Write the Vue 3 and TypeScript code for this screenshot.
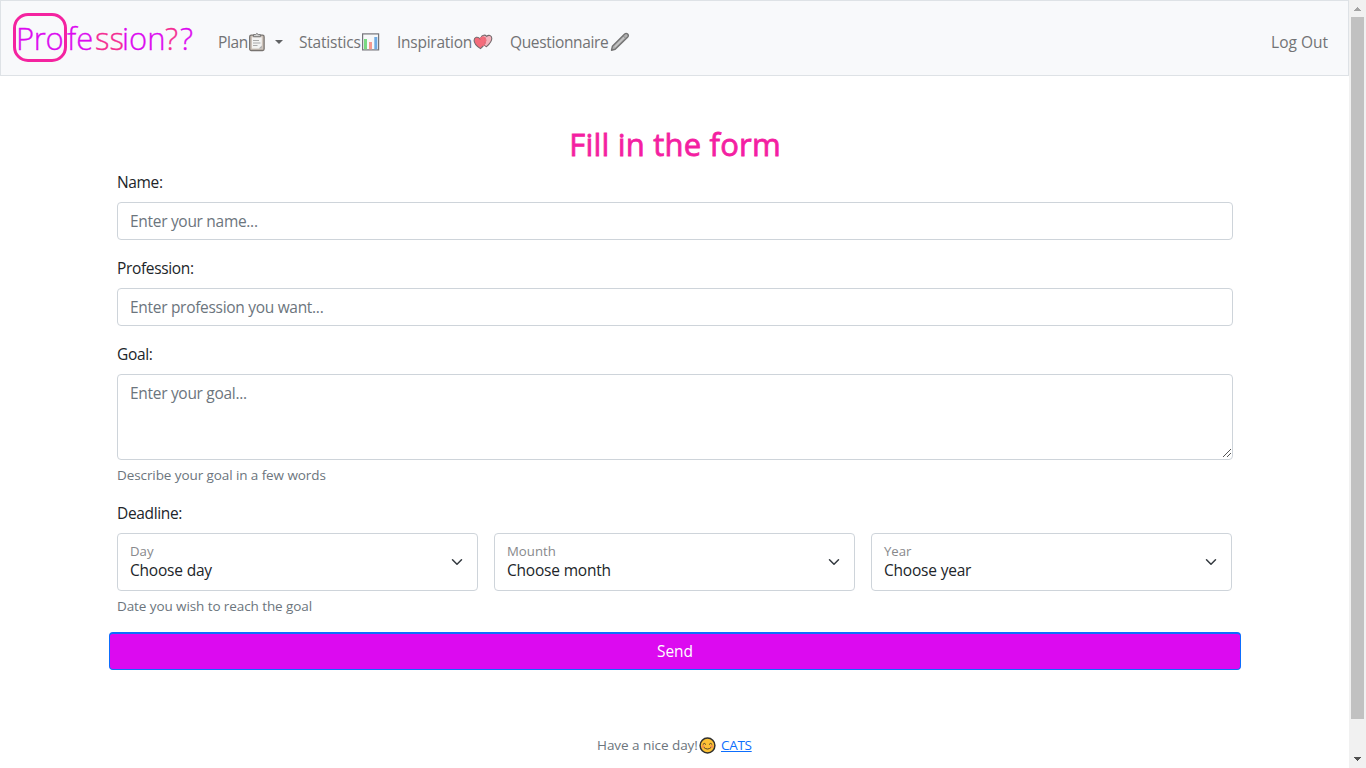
<script setup lang="ts">
import { ref } from 'vue'

interface TextField {
  id: string
  label: string
  placeholder: string
}
interface SelectField {
  id: string
  label: string
  choice: string
}

const fields: TextField[] = [
  { id: 'name', label: 'Name:', placeholder: 'Enter your name...' },
  { id: 'profession', label: 'Profession:', placeholder: 'Enter profession you want...' },
]
const selects: SelectField[] = [
  { id: 'day', label: 'Day', choice: 'Choose day' },
  { id: 'month', label: 'Mounth', choice: 'Choose month' },
  { id: 'year', label: 'Year', choice: 'Choose year' },
]
const values = ref<Record<string, string>>({ name: '', profession: '' })
const goal = ref('')
</script>

<template>
  <div class="window">
    <div class="page">
      <nav class="navbar">
        <a class="brand"><span class="brand-box">Pro</span><span class="fe">fe</span><span class="ss pink">ss</span><span class="ion">ion</span><span class="q pink">?</span><span class="q">?</span></a>
        <div class="links">
          <a class="link plan"><span class="t">Plan</span>
            <svg class="emoji clip" width="18" height="20" viewBox="0 0 18 20">
              <rect x="1.7" y="3.2" width="14.4" height="15.3" rx="1.5" fill="#cfc4bb" stroke="#77736f" stroke-width="1.3" />
              <rect x="4" y="5.3" width="9.8" height="11.2" fill="#f3f3f2" />
              <path d="M5.5 4.7V2.6H7.5Q8.9 .3 10.3 2.6H12.4V4.7Z" fill="#d7d7d6" stroke="#777" stroke-width="1" />
              <path d="M5 8.5H11M5 11H12.5M5 13.5H9.5" stroke="#aaa" stroke-width="1.1" />
              <path d="M13.8 13.5V16.5H10.8Z" fill="#aaa" />
            </svg>
            <span class="caret"></span>
          </a>
          <a class="link stats"><span class="t">Statistics</span>
            <svg class="emoji" width="19" height="20" viewBox="0 0 19 20">
              <rect x="1.6" y="1.9" width="16" height="16" fill="#f7f8f9" stroke="#74757a" stroke-width="1.2" />
              <rect x="3" y="7" width="3" height="10.3" fill="#78d982" />
              <rect x="8" y="10" width="3" height="7.3" fill="#f59a90" />
              <rect x="13.3" y="5" width="3" height="12.3" fill="#70abe3" />
            </svg>
          </a>
          <a class="link insp"><span class="t">Inspiration</span>
            <svg class="emoji" width="20" height="20" viewBox="0 0 20 20">
              <path d="M13.5 14.7C8.5 12 7.5 8 8.1 5.5C9 2.5 12.3 2.7 13.7 4.4C15.5 2.5 18.7 3.4 18.8 6.3C18.9 9 16 12.5 13.5 14.7Z" fill="#f4b2bc" stroke="#74696c" stroke-width="1.1" />
              <path d="M7.5 16.6C3.5 14 1 11 1.1 8.2C1.3 5 4.8 4.1 7 6.9C8.7 4.3 12.5 4.8 12.7 8C12.8 11 10.5 14 7.5 16.6Z" fill="#f46c7b" stroke="#74696c" stroke-width="1.1" />
              <path d="M7 6.9C8.7 4.3 12.5 4.8 12.7 8C12.8 10 11.5 12.3 10 14" fill="none" stroke="#f46c7b" stroke-width="1.4" />
            </svg>
          </a>
          <a class="link quest"><span class="t">Questionnaire</span>
            <svg class="emoji" width="20" height="20" viewBox="0 0 20 20">
              <path d="M1.5 18.2L2.4 14.3L14.7 2Q16.2 .7 17.6 2.1Q19 3.5 17.8 4.9L5.2 17.3Z" fill="#b0b0b0" stroke="#737373" stroke-width="1.4" stroke-linejoin="round" />
              <path d="M4.8 14.9L14.5 5.2" stroke="#c9c9c9" stroke-width="1.2" />
              <path d="M13 3.7L16.2 6.9" stroke="#858585" stroke-width=".8" />
            </svg>
          </a>
        </div>
        <a class="link logout"><span class="t">Log Out</span></a>
      </nav>

      <form class="form" @submit.prevent>
        <h2>Fill in the form</h2>
        <div v-for="f in fields" :key="f.id" class="group">
          <label :for="f.id">{{ f.label }}</label>
          <input :id="f.id" v-model="values[f.id]" class="control" type="text" :placeholder="f.placeholder">
        </div>
        <div class="group">
          <label for="goal">Goal:</label>
          <div class="area">
            <textarea id="goal" v-model="goal" class="control" placeholder="Enter your goal..."></textarea>
            <svg class="grip" width="10" height="10" viewBox="0 0 10 10" shape-rendering="crispEdges">
              <path d="M0.5 8.5L8.5 .5M4.5 8.5L8.5 4.5" stroke="#555" stroke-width="1" />
            </svg>
          </div>
          <div class="help">Describe your goal in a few words</div>
        </div>
        <div class="group">
          <label>Deadline:</label>
          <div class="selects">
            <div v-for="s in selects" :key="s.id" class="select">
              <div class="select-text">
                <div class="select-label">{{ s.label }}</div>
                <div class="select-choice">{{ s.choice }}</div>
              </div>
              <svg width="16" height="12" viewBox="0 0 16 16">
                <path d="M2 5l6 6 6-6" fill="none" stroke="#343a40" stroke-width="2" stroke-linecap="round" stroke-linejoin="round" />
              </svg>
            </div>
          </div>
          <div class="help">Date you wish to reach the goal</div>
        </div>
        <button class="send" type="submit">Send</button>
      </form>

      <footer class="footer">
        <span class="nice">Have a nice day!</span>
        <svg width="17" height="17" viewBox="0 0 17 17">
          <circle cx="8.5" cy="8.5" r="7.4" fill="#fdc235" stroke="#30302e" stroke-width="1.5" />
          <circle cx="4.2" cy="9.4" r="1.5" fill="#f5954f" />
          <circle cx="12.8" cy="9.4" r="1.5" fill="#f5954f" />
          <path d="M4 7.2Q5.3 5.2 6.7 7.2M10.3 7.2Q11.7 5.2 13 7.2M5.2 10.7Q8.5 13.6 11.8 10.7" fill="none" stroke="#54432c" stroke-width="1" stroke-linecap="round" />
        </svg>
        <a class="cats">CATS</a>
      </footer>
    </div>
    <div class="scrollbar">
      <svg width="17" height="17" viewBox="0 0 17 17" shape-rendering="crispEdges"><path d="M5 11H12L8.5 7Z" fill="#a3a3a3" /></svg>
      <div class="thumb"></div>
      <svg width="17" height="17" viewBox="0 0 17 17" shape-rendering="crispEdges"><path d="M5 6H12L8.5 10Z" fill="#505050" /></svg>
    </div>
  </div>
</template>

<style>
html, body { margin: 0; background: #fff; overflow: hidden; }
</style>

<style scoped>
* { box-sizing: border-box; }
.window {
  display: flex; width: 1366px; height: 768px; overflow: hidden;
  font-family: "Open Sans", "Noto Sans", sans-serif; font-size: 15.5px; line-height: 24px; color: #212529;
}
.page { width: 1349px; display: flex; flex-direction: column; }
.navbar {
  height: 76px; flex: none; display: flex; align-items: center; padding: 0 20px 0 12px;
  border: 1px solid #dee2e6; background: #f8f9fb;
}
.brand {
  display: flex; align-items: center; height: 49px; width: 197px; flex: none; margin-bottom: 2px;
  font-size: 31px; font-weight: 300; line-height: 45px; color: #dc0af0; white-space: nowrap;
  -webkit-text-stroke: 0.35px currentColor;
}
.brand > span { flex: none; }
.brand-box { width: 54px; height: 49px; border: 3px solid #f423a0; border-radius: 15px; letter-spacing: -0.4px; }
.brand > span:not(.brand-box) { padding-top: 2px; }
.fe { width: 28px; }
.ss { width: 27px; }
.ion { width: 43px; }
.q { width: 15px; }
.pink { color: #f42d92; }
.links { display: flex; flex: 1; }
.link { display: flex; align-items: center; color: #727375; white-space: nowrap; height: 40px; margin-top: 8px; }
.t { flex: none; }
.emoji { flex: none; display: block; }
.plan { margin-left: 8px; width: 81px; }
.plan .t { width: 30px; letter-spacing: -0.4px; }
.stats { width: 98px; }
.stats .t { width: 62px; letter-spacing: -0.2px; }
.insp { width: 113px; }
.insp .t { width: 76px; letter-spacing: -0.25px; }
.quest .t { width: 100px; letter-spacing: -0.35px; }
.caret { margin-left: 9px; border: 4px solid transparent; border-top-color: #606264; border-bottom: 0; }
.logout { letter-spacing: 0; }

.form { width: 1132px; margin: 48px 0 0 109px; }
h2 {
  margin: 0 0 8px; height: 38px; line-height: 41px; font-size: 31px; font-weight: 400; text-align: center;
  color: #f41fa2; letter-spacing: 0.2px; white-space: nowrap; -webkit-text-stroke: 0.8px currentColor;
}
.group { padding: 0 8px; margin-bottom: 16px; }
label { display: block; height: 24px; margin-bottom: 8px; letter-spacing: -0.35px; line-height: 25px; }
.control {
  display: block; width: 100%; height: 38px; padding: 6px 12px; border: 1px solid #ced4da; border-radius: 4px;
  font: inherit; letter-spacing: -0.3px; outline: 0; background: #fff; color: #212529; resize: none;
}
.control::placeholder { color: #6c757d; opacity: 1; }
textarea.control { height: 86px; }
.area { position: relative; }
.grip { position: absolute; right: 1px; bottom: 1px; }
.help { height: 21px; margin-top: 4px; font-size: 13.5px; line-height: 22px; color: #6c757d; letter-spacing: -0.09px; }
.selects { display: grid; grid-template-columns: repeat(3, 361px); gap: 16px; }
.select {
  height: 58px; border: 1px solid #ced4da; border-radius: 4px; padding: 0 12px;
  display: flex; justify-content: space-between; align-items: center;
}
.select svg { display: block; }
.select-text { padding-bottom: 4px; }
.select-label { font-size: 13.2px; line-height: 18px; color: #88898c; margin-top: 1px; }
.select-choice { line-height: 20px; letter-spacing: -0.2px; }
.send {
  display: block; width: 1132px; height: 38px; padding: 0 0 2px; border: 1px solid #0d6efd; border-top-width: 2px; border-radius: 4px;
  background: #dc0af0; color: #fff; font: inherit; letter-spacing: -0.1px; text-align: center;
}
.footer {
  display: flex; justify-content: center; align-items: center; margin-top: 64px; height: 22px;
  font-size: 13.5px; line-height: 22px; color: #6c757d; white-space: nowrap;
}
.nice { width: 102px; letter-spacing: -0.05px; }
.cats { margin-left: 5px; color: #0d6efd; text-decoration: underline; width: 31px; letter-spacing: -0.3px; }
.scrollbar { width: 17px; height: 768px; background: #f1f1f1; display: flex; flex-direction: column; }
.scrollbar svg { display: block; flex: none; }
.thumb { height: 702px; width: 13px; margin: 0 2px auto; background: #c1c1c1; }
</style>
